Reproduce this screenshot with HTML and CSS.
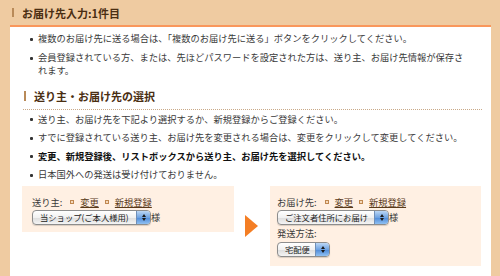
FILE: index.html
```html
<!DOCTYPE html>
<html lang="ja">
<head>
<meta charset="utf-8">
<title>お届け先入力</title>
<link rel="stylesheet" href="styles.css">
</head>
<body>
<div class="page">
  <div class="head"><span class="head-bar"></span><h1 class="head-title">お届け先入力:1件目</h1></div>
  <div class="panel">
    <ul class="notes notes-top">
      <li>複数のお届け先に送る場合は、「複数のお届け先に送る」ボタンをクリックしてください。</li>
      <li>会員登録されている方、または、先ほどパスワードを設定された方は、送り主、お届け先情報が保存されます。</li>
    </ul>
    <h2 class="section-title"><span class="section-bar"></span>送り主・お届け先の選択</h2>
    <ul class="notes notes-sec">
      <li>送り主、お届け先を下記より選択するか、新規登録からご登録ください。</li>
      <li>すでに登録されている送り主、お届け先を変更される場合は、変更をクリックして変更してください。</li>
      <li class="strong">変更、新規登録後、リストボックスから送り主、お届け先を選択してください。</li>
      <li>日本国外への発送は受け付けておりません。</li>
    </ul>
    <div class="choose">
      <div class="box box-left">
        <div class="label-row">送り主:<span class="sq"></span><a href="#" class="lnk">変更</a><span class="sq"></span><a href="#" class="lnk">新規登録</a></div>
        <div class="sel-row"><span class="sel sel-sender"><span class="sel-val">当ショップ(ご本人様用)</span><span class="sel-btn"><span class="up"></span><span class="dn"></span></span></span>様</div>
      </div>
      <div class="arrow"></div>
      <div class="box box-right">
        <div class="label-row">お届け先:<span class="sq"></span><a href="#" class="lnk">変更</a><span class="sq"></span><a href="#" class="lnk">新規登録</a></div>
        <div class="sel-row"><span class="sel sel-dest"><span class="sel-val">ご注文者住所にお届け</span><span class="sel-btn"><span class="up"></span><span class="dn"></span></span></span>様</div>
        <div class="label-row label-ship">発送方法:</div>
        <div class="sel-row"><span class="sel sel-ship"><span class="sel-val">宅配便</span><span class="sel-btn"><span class="up"></span><span class="dn"></span></span></span></div>
      </div>
    </div>
  </div>
</div>
</body>
</html>
```
FILE: styles.css
```css
* { box-sizing: border-box; }
html, body { margin: 0; padding: 0; }
body {
  background: #efcba1;
  font-family: "Noto Sans CJK JP", "Noto Sans", sans-serif;
  color: #3a3a3a;
  height: 276px;
  overflow: hidden;
}
.page { padding: 0 9px 0 10px; }
.head {
  height: 25px;
  display: flex;
  align-items: center;
  padding-left: 2px;
  gap: 8px;
}
.head-bar { width: 2px; height: 9px; background: #b98a58; }
.head-title {
  margin: 0;
  font-size: 11px;
  font-weight: bold;
  color: #4a2e12;
  line-height: 14px;
}
.panel {
  background: #fff;
  border-top: 2px solid #f9975c;
  padding: 5px 0 20px 0;
  min-height: 260px;
}
.notes {
  list-style: none;
  margin: 0;
  padding: 0 0 0 20px;
  font-size: 9.25px;
  line-height: 13px;
}
.notes li { position: relative; padding-left: 8px; }
.notes li::before {
  content: "";
  position: absolute;
  left: 0;
  top: 5.5px;
  width: 3px;
  height: 3px;
  border-radius: 1px;
  background: #333;
}
.notes-top { width: 458px; }
.notes-top li + li { margin-top: 6px; }
.section-title {
  margin: 11.5px 9px 0 13px;
  padding: 0 0 6px 1px;
  border-bottom: 1px dotted #c9a988;
  display: flex;
  align-items: center;
  gap: 8px;
  font-size: 11px;
  line-height: 14px;
  font-weight: bold;
  color: #4a2e12;
}
.section-bar { width: 2px; height: 10px; background: #b98a58; }
.notes-sec { margin-top: 3px; }
.notes-sec li + li { margin-top: 5.5px; }
.notes .strong { font-weight: bold; color: #111; }
.choose {
  display: flex;
  align-items: flex-start;
  margin: 5px 0 0 12px;
}
.box {
  background: #fff0e3;
  padding: 9.5px 0 7px 7px;
  font-size: 9.25px;
  line-height: 13px;
}
.box-left { width: 212px; padding-left: 10px; }
.box-right { width: 211px; padding-bottom: 9px; }
.arrow {
  align-self: center;
  margin: 0 12px 0 11px;
  width: 0;
  height: 0;
  border-top: 11px solid transparent;
  border-bottom: 11px solid transparent;
  border-left: 13px solid #f47e24;
}
.label-row { display: flex; align-items: center; color: #3a3a3a; }
.label-row .sq {
  width: 4px;
  height: 4px;
  border: 1px solid #c08850;
  background: #f5d9bb;
  margin: 0 6px 0 8px;
}
.label-row .sq ~ .sq { margin-left: 6px; }
.lnk { color: #5a3a1a; text-decoration: underline; }
.label-ship { margin-top: 2px; }
.sel-row { display: flex; align-items: center; margin-top: 1.5px; color: #3a3a3a; }
.sel {
  display: flex;
  align-items: stretch;
  height: 15px;
  border: 1px solid #8d8d8d;
  border-radius: 4px;
  background: linear-gradient(#ffffff, #f1f1f1 50%, #dcdcdc 51%, #f4f4f4);
  overflow: hidden;
  box-shadow: 0 1px 1px rgba(0,0,0,0.15);
  font-size: 8.3px;
  line-height: 13px;
  color: #222;
}
.sel-val { flex: 1; padding-left: 7px; white-space: nowrap; overflow: hidden; }
.sel-btn {
  width: 14px;
  background: linear-gradient(#bcd7f5, #6fa3e2 50%, #4c89d8 51%, #8fc0f2);
  border-left: 1px solid #6f8fb8;
  display: flex;
  flex-direction: column;
  align-items: center;
  justify-content: center;
  gap: 1px;
}
.up { width: 0; height: 0; border-left: 2px solid transparent; border-right: 2px solid transparent; border-bottom: 3px solid #1a1a1a; }
.dn { width: 0; height: 0; border-left: 2px solid transparent; border-right: 2px solid transparent; border-top: 3px solid #1a1a1a; }
.sel-sender { width: 119px; }
.sel-dest { width: 112px; }
.sel-ship { width: 53px; }
```
